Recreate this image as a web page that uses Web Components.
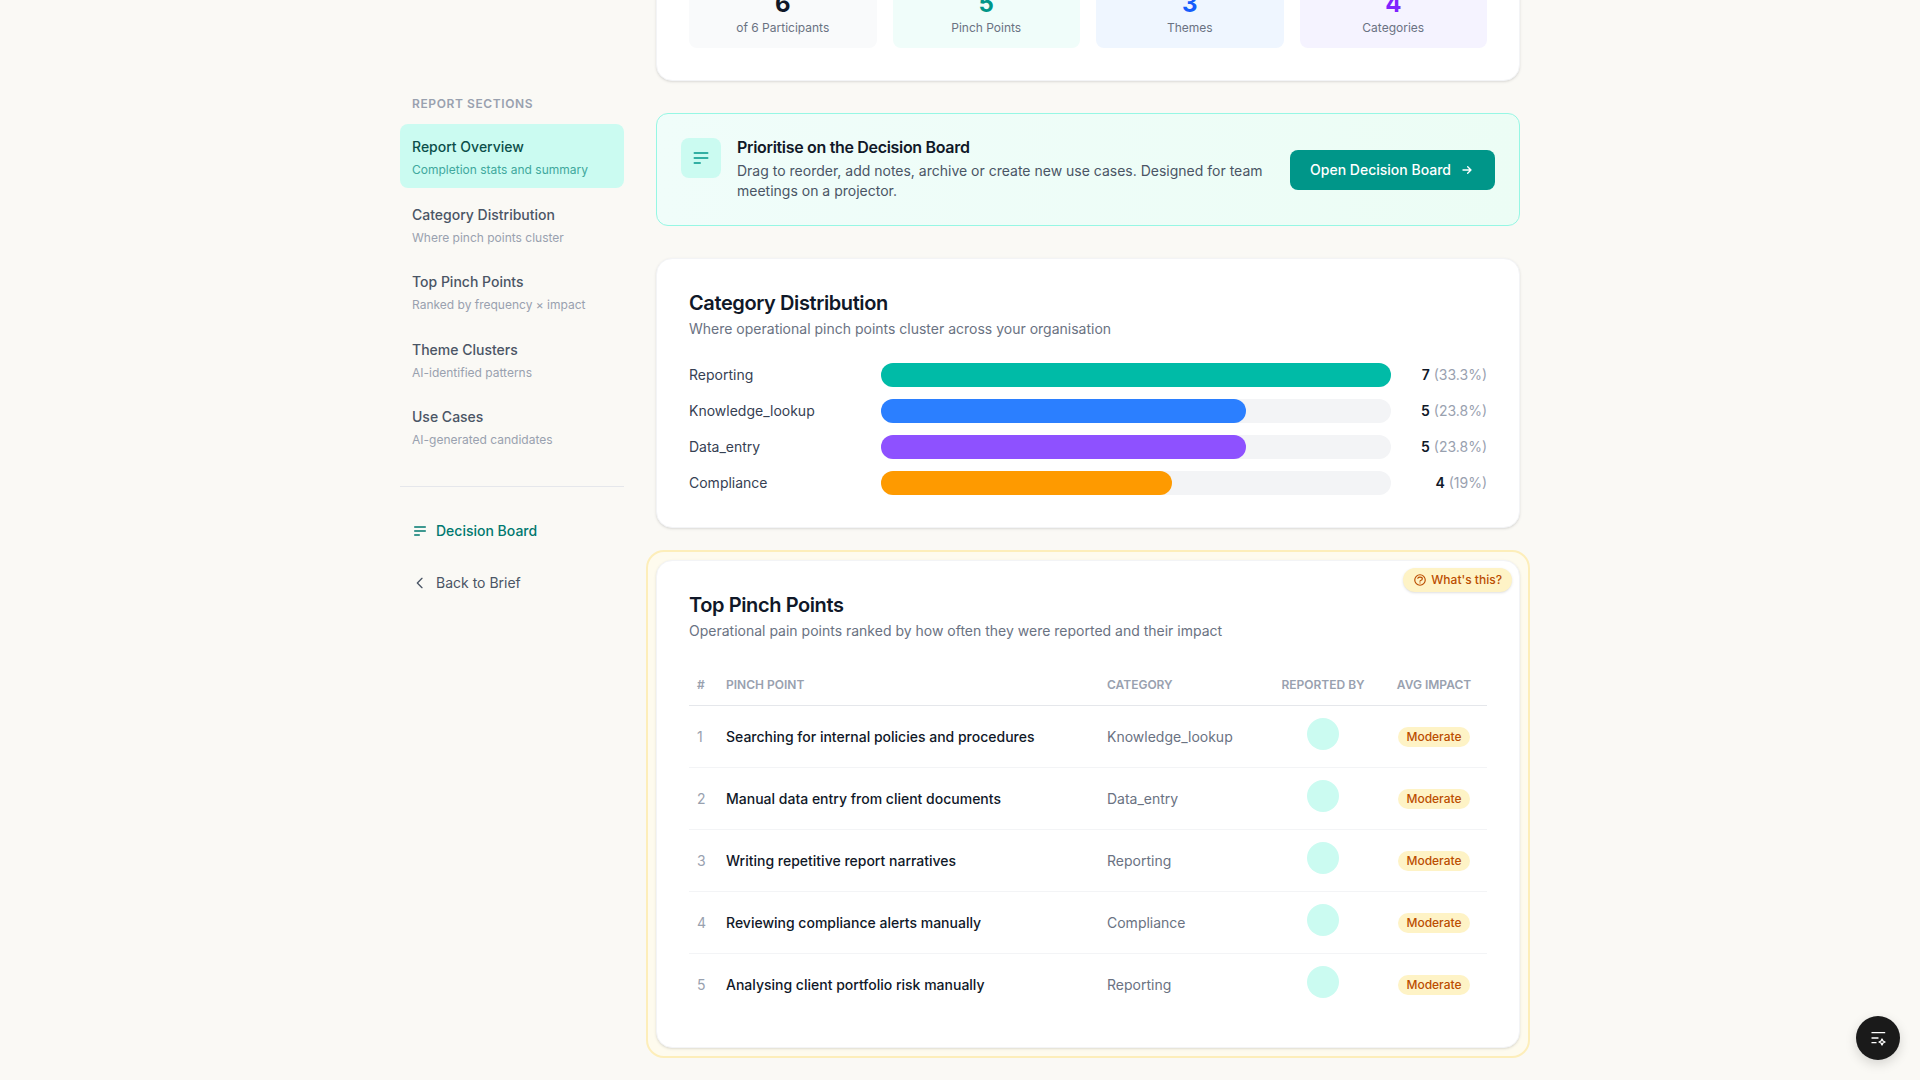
<!DOCTYPE html>
<html lang="en">
<head>
<meta charset="utf-8">
<meta name="viewport" content="width=device-width, initial-scale=1">
<title>Report Overview</title>
<style>
  body {
    margin: 0;
    background: #faf9f5;
    color: #101828;
    font-family: Inter, "Liberation Sans", sans-serif;
    font-size: 14px;
    line-height: 20px;
  }
</style>
</head>
<body>
<report-page></report-page>

<script>
class BaseElement extends HTMLElement {
  constructor() {
    super();
    this.attachShadow({ mode: 'open' });
  }

  connectedCallback() {
    this.render();
  }

  render() {
    const template = document.createElement('template');
    template.innerHTML = `
      <style>
        * { box-sizing: border-box; }
        h2, h3, p { margin: 0; }
        a { color: inherit; text-decoration: none; }
        ${this.getStyles()}
      </style>
      ${this.getMarkup()}
    `;
    this.shadowRoot.innerHTML = '';
    this.shadowRoot.appendChild(template.content.cloneNode(true));
  }
}

// Stroke icons on a 24 unit grid
const ICONS = {
  board: '<path d="M4 6h16M4 12h16M4 18h7"/>',
  back: '<path d="M15 19l-7-7 7-7"/>',
  arrow: '<path d="M13 7l5 5m0 0l-5 5m5-5H6"/>',
  help: '<circle cx="12" cy="12" r="9"/><path d="M8.2 9c.6-1.200 2.100-2 3.800-2 2.200 0 4 1.300 4 3 0 1.400-1.300 2.600-3 2.900-.5.100-1 .5-1 1.100M12 17h.01"/>',
  sparkle: '<path d="M3 4h19M3 12h9M3 19h6"/><path d="M18 13.500l1.500 3 3 1.500-3 1.500-1.500 3-1.500-3-3-1.500 3-1.500z"/>'
};

class UiIcon extends BaseElement {
  getStyles() {
    return `
      :host { display: block; flex: none; width: 16px; height: 16px; }
      svg {
        display: block;
        width: 100%;
        height: 100%;
        fill: none;
        stroke: currentColor;
        stroke-width: 2;
        stroke-linecap: round;
        stroke-linejoin: round;
      }
    `;
  }

  getMarkup() {
    return `<svg viewBox="0 0 24 24" aria-hidden="true">${ICONS[this.getAttribute('name')]}</svg>`;
  }
}

class ReportNavItem extends BaseElement {
  getStyles() {
    return `
      :host { display: grid; color: #4a5565; }
      a { padding: 10px 12px 8px; border-radius: 8px; }
      span { display: block; }
      .title { font-weight: 500; line-height: 26px; }
      .hint { margin-top: 2px; color: #99a1af; font-size: 12px; line-height: 16px; }
      :host([active]) a { background: #cbfbf1; }
      :host([active]) .title { color: #0b4f4a; }
      :host([active]) .hint { color: #40a89d; }
    `;
  }

  getMarkup() {
    return `
      <a href="#">
        <span class="title"><slot></slot></span>
        <span class="hint">${this.getAttribute('hint')}</span>
      </a>
    `;
  }
}

class ReportSidebar extends BaseElement {
  getStyles() {
    return `
      :host { display: block; position: sticky; top: 96px; }
      h3 {
        margin: 0 12px 12px;
        color: #99a1af;
        font-size: 12px;
        font-weight: 600;
        line-height: 16px;
        letter-spacing: 0.05em;
        text-transform: uppercase;
      }
      nav { display: grid; grid-auto-rows: 1fr; gap: 4px; min-height: 334px; }
      .links {
        display: grid;
        gap: 8px;
        margin-top: 28px;
        padding-top: 22px;
        border-top: 1px solid #e5e7eb;
      }
      .links a {
        display: flex;
        align-items: center;
        gap: 8px;
        padding: 12px;
        color: #4a5565;
      }
      .links .board { color: #00786f; font-weight: 500; }
    `;
  }

  getMarkup() {
    return `
      <h3>Report Sections</h3>
      <nav>
        <report-nav-item active hint="Completion stats and summary">Report Overview</report-nav-item>
        <report-nav-item hint="Where pinch points cluster">Category Distribution</report-nav-item>
        <report-nav-item hint="Ranked by frequency × impact">Top Pinch Points</report-nav-item>
        <report-nav-item hint="AI-identified patterns">Theme Clusters</report-nav-item>
        <report-nav-item hint="AI-generated candidates">Use Cases</report-nav-item>
      </nav>
      <div class="links">
        <a class="board" href="#"><ui-icon name="board"></ui-icon>Decision Board</a>
        <a href="#"><ui-icon name="back"></ui-icon>Back to Brief</a>
      </div>
    `;
  }
}

class ReportCard extends BaseElement {
  getStyles() {
    return `
      :host {
        display: block;
        padding: 32px;
        border: 1px solid #f3f4f6;
        border-radius: 16px;
        background: #fff;
        box-shadow: 0 1px 3px rgba(0, 0, 0, 0.1), 0 1px 2px -1px rgba(0, 0, 0, 0.1);
        box-sizing: border-box;
      }
      header { margin-bottom: 24px; }
      h2 { font-size: 20px; font-weight: 600; line-height: 24px; letter-spacing: -0.02em; }
      p { margin-top: 4px; color: #6a7282; }
    `;
  }

  getMarkup() {
    const heading = this.getAttribute('heading');
    const header = heading
      ? `<header><h2>${heading}</h2><p>${this.getAttribute('summary')}</p></header>`
      : '';
    return `${header}<slot></slot>`;
  }
}

class StatTile extends BaseElement {
  getStyles() {
    return `
      :host {
        display: block;
        padding: 12px;
        border-radius: 8px;
        background: #f9fafb;
        text-align: center;
      }
      .value { font-size: 24px; font-weight: 700; line-height: 32px; }
      .label { color: #6a7282; font-size: 12px; line-height: 16px; }
      :host([tone="teal"]) { background: #f0fdfa; color: #009689; }
      :host([tone="blue"]) { background: #eff6ff; color: #155dfc; }
      :host([tone="violet"]) { background: #f5f3ff; color: #7f22fe; }
    `;
  }

  getMarkup() {
    return `
      <div class="value">${this.getAttribute('value')}</div>
      <div class="label"><slot></slot></div>
    `;
  }
}

class BoardBanner extends BaseElement {
  getStyles() {
    return `
      :host {
        display: flex;
        align-items: center;
        gap: 16px;
        padding: 24px;
        border: 1px solid #96f7e4;
        border-radius: 12px;
        background: linear-gradient(to right, #f0fdfa, #ecfdf5);
      }
      .tile {
        display: grid;
        flex: none;
        place-items: center;
        align-self: flex-start;
        width: 40px;
        height: 40px;
        border-radius: 8px;
        background: #cbfbf1;
        color: #009689;
      }
      .tile ui-icon { width: 20px; height: 20px; }
      .text { flex: 1; }
      h3 { font-size: 16px; font-weight: 600; line-height: 19px; letter-spacing: -0.02em; }
      p { margin-top: 4px; color: #4a5565; }
      button {
        display: flex;
        flex: none;
        align-items: center;
        gap: 8px;
        padding: 10px 20px;
        border: 0;
        border-radius: 8px;
        background: #009689;
        color: #fff;
        font: inherit;
        font-weight: 500;
      }
    `;
  }

  getMarkup() {
    return `
      <div class="tile"><ui-icon name="board"></ui-icon></div>
      <div class="text">
        <h3>Prioritise on the Decision Board</h3>
        <p>Drag to reorder, add notes, archive or create new use cases. Designed for team meetings on a projector.</p>
      </div>
      <button type="button">Open Decision Board <ui-icon name="arrow"></ui-icon></button>
    `;
  }
}

class CategoryBar extends BaseElement {
  getStyles() {
    const share = this.getAttribute('percent') / this.getAttribute('max');
    return `
      :host {
        display: grid;
        grid-template-columns: 176px 1fr 80px;
        align-items: center;
        gap: 16px;
      }
      .label { color: #364153; }
      .track { height: 24px; border-radius: 12px; background: #f3f4f6; }
      .fill {
        width: calc(100% * ${share});
        height: 100%;
        border-radius: 12px;
        background: ${this.getAttribute('color')};
      }
      .value { color: #99a1af; text-align: right; white-space: nowrap; }
      b { color: #101828; font-weight: 600; }
    `;
  }

  getMarkup() {
    return `
      <span class="label"><slot></slot></span>
      <div class="track"><div class="fill"></div></div>
      <span class="value"><b>${this.getAttribute('count')}</b> (${this.getAttribute('percent')}%)</span>
    `;
  }
}

class PinchTable extends BaseElement {
  getStyles() {
    return `
      :host { display: block; }
      table { width: 100%; border-spacing: 0; table-layout: fixed; }
      .col-rank { width: 29px; }
      .col-category { width: 166px; }
      .col-people { width: 116px; }
      .col-impact { width: 106px; }
      th {
        padding: 12px 8px;
        border-bottom: 1px solid #e5e7eb;
        color: #99a1af;
        font-size: 12px;
        font-weight: 600;
        line-height: 16px;
        text-align: left;
        text-transform: uppercase;
        white-space: nowrap;
      }
      td { padding: 12px 8px; border-bottom: 1px solid #f3f4f6; color: #6a7282; }
      tr:last-child td { border-bottom: 0; }
      .rank { color: #99a1af; }
      .name { color: #101828; font-weight: 500; }
      .center { text-align: center; }
      td.people { padding-bottom: 17px; }
      .avatar {
        display: block;
        width: 32px;
        height: 32px;
        margin: 0 auto;
        border-radius: 50%;
        background: #cbfbf1;
      }
      .badge {
        display: inline-block;
        padding: 2px 8px;
        border-radius: 10px;
        background: #fef3c6;
        color: #bb4d00;
        font-size: 12px;
        font-weight: 500;
        line-height: 16px;
        vertical-align: middle;
      }
    `;
  }

  getMarkup() {
    const rows = [
      ['Searching for internal policies and procedures', 'Knowledge_lookup'],
      ['Manual data entry from client documents', 'Data_entry'],
      ['Writing repetitive report narratives', 'Reporting'],
      ['Reviewing compliance alerts manually', 'Compliance'],
      ['Analysing client portfolio risk manually', 'Reporting']
    ];
    return `
      <table>
        <colgroup>
          <col class="col-rank"><col><col class="col-category"><col class="col-people"><col class="col-impact">
        </colgroup>
        <thead>
          <tr>
            <th>#</th>
            <th>Pinch Point</th>
            <th>Category</th>
            <th class="center">Reported By</th>
            <th class="center">Avg Impact</th>
          </tr>
        </thead>
        <tbody>
          ${rows.map(([name, category], i) => `
            <tr>
              <td class="rank">${i + 1}</td>
              <td class="name">${name}</td>
              <td>${category}</td>
              <td class="people"><span class="avatar"></span></td>
              <td class="center"><span class="badge">Moderate</span></td>
            </tr>
          `).join('')}
        </tbody>
      </table>
    `;
  }
}

// Highlight frame with a help button over the corner of its content
class TourHighlight extends BaseElement {
  getStyles() {
    return `
      :host { display: block; position: relative; isolation: isolate; }
      :host::before {
        content: "";
        position: absolute;
        inset: -10px;
        z-index: -1;
        border: 2px solid #fdeeba;
        border-radius: 18px;
        background: #fefbee;
      }
      button {
        position: absolute;
        top: 8px;
        right: 8px;
        display: flex;
        align-items: center;
        gap: 4px;
        padding: 4px 10px;
        border: 0;
        border-radius: 12px;
        background: #fef3c6;
        color: #bb4d00;
        font: inherit;
        font-size: 12px;
        font-weight: 500;
        line-height: 16px;
        box-shadow: 0 1px 3px rgba(0, 0, 0, 0.1), 0 1px 2px -1px rgba(0, 0, 0, 0.1);
      }
      ui-icon { width: 14px; height: 14px; }
    `;
  }

  getMarkup() {
    return `
      <slot></slot>
      <button type="button"><ui-icon name="help"></ui-icon>What's this?</button>
    `;
  }
}

class FeedbackButton extends BaseElement {
  getStyles() {
    return `
      :host { display: block; position: fixed; right: 20px; bottom: 20px; }
      button {
        display: grid;
        place-items: center;
        width: 44px;
        height: 44px;
        padding: 0;
        border: 0;
        border-radius: 50%;
        background: #1a1a1a;
        color: #fff;
        box-shadow: 0 4px 12px rgba(0, 0, 0, 0.15);
      }
    `;
  }

  getMarkup() {
    return '<button type="button" aria-label="Feedback"><ui-icon name="sparkle"></ui-icon></button>';
  }
}

class ReportPage extends BaseElement {
  getStyles() {
    return `
      /* the page opens scrolled past the top of the stats card */
      :host {
        display: grid;
        grid-template-columns: 224px minmax(0, 1fr);
        align-items: start;
        gap: 32px;
        max-width: 1152px;
        margin: -57px auto 0;
        padding: 0 16px 32px;
        box-sizing: border-box;
      }
      main { display: grid; gap: 32px; }
      .stats { display: grid; grid-template-columns: repeat(4, 1fr); gap: 16px; }
      .bars { display: grid; gap: 12px; }
    `;
  }

  getMarkup() {
    return `
      <report-sidebar></report-sidebar>
      <main>
        <report-card>
          <div class="stats">
            <stat-tile value="6">of 6 Participants</stat-tile>
            <stat-tile value="5" tone="teal">Pinch Points</stat-tile>
            <stat-tile value="3" tone="blue">Themes</stat-tile>
            <stat-tile value="4" tone="violet">Categories</stat-tile>
          </div>
        </report-card>
        <board-banner></board-banner>
        <report-card heading="Category Distribution" summary="Where operational pinch points cluster across your organisation">
          <div class="bars">
            <category-bar count="7" max="33.3" percent="33.3" color="#00bba7">Reporting</category-bar>
            <category-bar count="5" max="33.3" percent="23.8" color="#2b7fff">Knowledge_lookup</category-bar>
            <category-bar count="5" max="33.3" percent="23.8" color="#8e51ff">Data_entry</category-bar>
            <category-bar count="4" max="33.3" percent="19" color="#fe9a00">Compliance</category-bar>
          </div>
        </report-card>
        <tour-highlight>
          <report-card heading="Top Pinch Points" summary="Operational pain points ranked by how often they were reported and their impact">
            <pinch-table></pinch-table>
          </report-card>
        </tour-highlight>
      </main>
      <feedback-button></feedback-button>
    `;
  }
}

customElements.define('ui-icon', UiIcon);
customElements.define('report-nav-item', ReportNavItem);
customElements.define('report-sidebar', ReportSidebar);
customElements.define('report-card', ReportCard);
customElements.define('stat-tile', StatTile);
customElements.define('board-banner', BoardBanner);
customElements.define('category-bar', CategoryBar);
customElements.define('pinch-table', PinchTable);
customElements.define('tour-highlight', TourHighlight);
customElements.define('feedback-button', FeedbackButton);
customElements.define('report-page', ReportPage);
</script>
</body>
</html>
